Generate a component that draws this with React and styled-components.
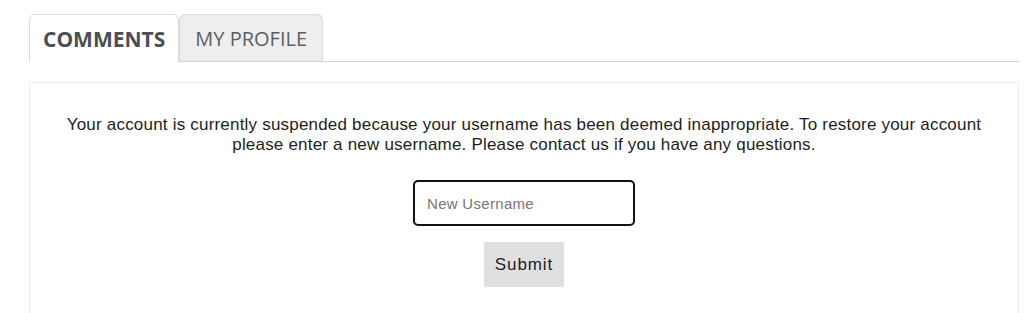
import React from 'react';
import styled, { createGlobalStyle } from 'styled-components';

const GlobalStyle = createGlobalStyle`
  body {
    margin: 0;
    background: #fff;
    font-family: "Liberation Sans", Arial, sans-serif;
  }
`;

const Page = styled.div`
  padding: 14px 7px 0 29px;
`;

const TabBar = styled.div`
  display: flex;
  border-bottom: 1px solid #d4d4d4;
`;

const Tab = styled.div`
  box-sizing: border-box;
  padding: 0 ${(p) => (p.active ? '13px' : '15px')};
  display: flex;
  align-items: center;
  font-family: "Open Sans", "DejaVu Sans", sans-serif;
  font-size: ${(p) => (p.active ? '21px' : '20px')};
  font-weight: ${(p) => (p.active ? 700 : 400)};
  color: ${(p) => (p.active ? '#4a4f55' : '#5a5f66')};
  background: ${(p) => (p.active ? '#fff' : '#eeeeee')};
  border: 1px solid #dcdcdc;
  border-bottom: none;
  border-radius: 6px 6px 0 0;
  margin-bottom: ${(p) => (p.active ? '-1px' : '0')};
  height: ${(p) => (p.active ? '48px' : '47px')};
`;

const Panel = styled.div`
  margin-top: 20px;
  border: 1px solid #ececec;
  border-bottom: none;
  padding: 32px 20px 40px;
  display: flex;
  flex-direction: column;
  align-items: center;
`;

const Message = styled.p`
  margin: 0;
  max-width: 945px;
  text-align: center;
  font-size: 17px;
  letter-spacing: 0.2px;
  line-height: 20px;
  color: #1e1e1e;
`;

const Input = styled.input`
  margin-top: 25px;
  width: 222px;
  height: 46px;
  box-sizing: border-box;
  border: 2px solid #111;
  border-radius: 5px;
  padding: 0 12px;
  font-family: "Liberation Sans", Arial, sans-serif;
  font-size: 15px;
  letter-spacing: 0.3px;
  outline: none;
  &::placeholder {
    color: #777;
  }
`;

const Button = styled.button`
  margin-top: 16px;
  width: 80px;
  height: 45px;
  border: none;
  border-radius: 2px;
  background: #e0e0e0;
  color: #222;
  font-family: "Liberation Sans", Arial, sans-serif;
  font-size: 17px;
  letter-spacing: 0.9px;
  cursor: pointer;
`;

const App = () => {
  return (
    <>
      <GlobalStyle />
      <Page>
        <TabBar>
          <Tab active>COMMENTS</Tab>
          <Tab>MY PROFILE</Tab>
        </TabBar>
        <Panel>
          <Message>
            Your account is currently suspended because your username has been deemed
            inappropriate. To restore your account please enter a new username. Please
            contact us if you have any questions.
          </Message>
          <Input placeholder="New Username" />
          <Button>Submit</Button>
        </Panel>
      </Page>
    </>
  );
};

export default App;
